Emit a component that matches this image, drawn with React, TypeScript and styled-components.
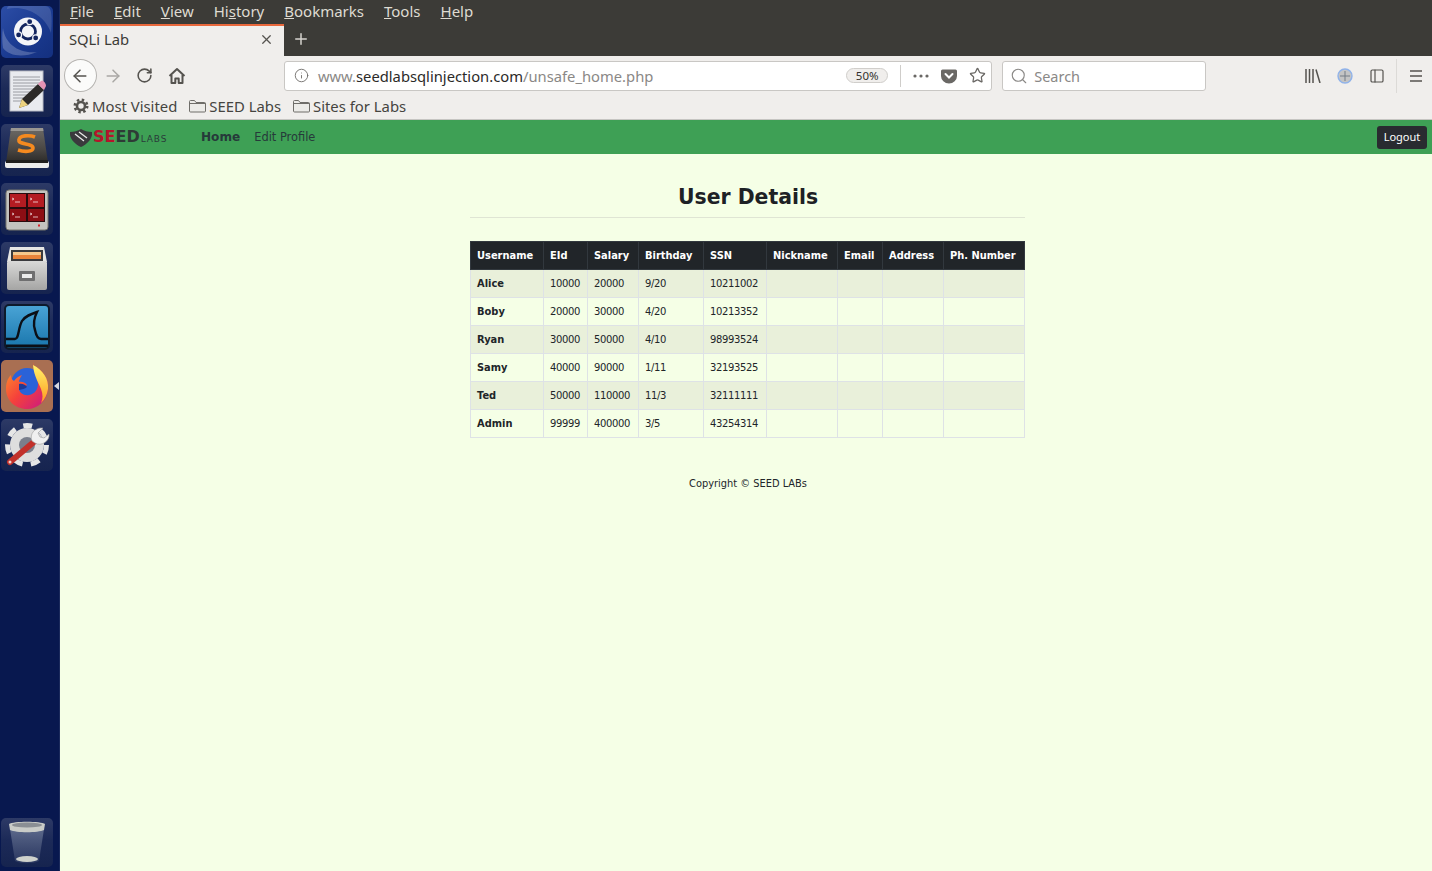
import React from "react";
import styled, { createGlobalStyle } from "styled-components";
import { ArrowLeft, ArrowRight, RotateCw, Info, Star, Search, X, Plus, PanelLeft } from "lucide-react";

const GlobalStyle = createGlobalStyle`
  html, body {
    margin: 0;
    padding: 0;
    height: 100%;
    overflow: hidden;
  }
  * { box-sizing: border-box; }
`;

const PAGE_BG = "#f5ffe6";

const Desktop = styled.div`
  display: flex;
  width: 1432px;
  height: 871px;
  background: ${PAGE_BG};
`;

/* launcher */
const Launcher = styled.aside`
  width: 60px;
  flex: none;
  position: relative;
  display: flex;
  flex-direction: column;
  gap: 7px;
  padding: 6px 0 4px 1px;
  background: #08184f;
  border-right: 1px solid #1b2a5c;
`;
const Tile = styled.div<{ $bg?: string }>`
  width: 52px;
  height: 52px;
  border-radius: 5px;
  display: flex;
  align-items: center;
  justify-content: center;
  background: ${({ $bg }) => $bg || "linear-gradient(180deg, #2d3a66 0%, #1c2a58 45%, #16244f 100%)"};
`;
const TrashTile = styled(Tile)`
  margin-top: auto;
  height: 49px;
`;
const ActiveArrow = styled.div`
  position: absolute;
  left: 54px;
  top: 382px;
  width: 0;
  height: 0;
  border-top: 4px solid transparent;
  border-bottom: 4px solid transparent;
  border-right: 5px solid #d5d8e2;
`;

/* browser chrome */
const Browser = styled.main`
  flex: 1;
  min-width: 0;
  display: flex;
  flex-direction: column;
  font-family: "Noto Sans", "Open Sans", sans-serif;
`;
const MenuBar = styled.nav`
  height: 24px;
  display: flex;
  align-items: center;
  gap: 20px;
  padding: 0 0 2px 10px;
  background: #3c3b37;
  color: #dfdbd2;
  font-size: 15px;
`;
const TabStrip = styled.div`
  height: 32px;
  display: flex;
  background: #3c3b37;
`;
const Tab = styled.div`
  width: 224px;
  display: flex;
  align-items: center;
  justify-content: space-between;
  padding: 0 10px 4px 9px;
  background: #f0eeec;
  border-top: 2px solid #e9683c;
  color: #3c3b37;
  font-size: 14.75px;
`;
const NewTab = styled.div`
  width: 34px;
  display: flex;
  align-items: center;
  justify-content: center;
  padding-bottom: 2px;
  color: #d6d4cf;
`;
const Toolbar = styled.div`
  height: 39px;
  display: flex;
  align-items: center;
  background: #f0eeec;
  position: relative;
`;
const BackButton = styled.div`
  width: 33px;
  height: 33px;
  margin-left: 4px;
  border-radius: 50%;
  border: 1px solid #b5b3b0;
  background: #fbfbfa;
  display: flex;
  align-items: center;
  justify-content: center;
  color: #55534f;
`;
const ToolButton = styled.div<{ $dim?: boolean }>`
  width: 32px;
  height: 32px;
  display: flex;
  align-items: center;
  justify-content: center;
  color: ${({ $dim }) => ($dim ? "#a9a7a4" : "#55534f")};
`;
const UrlBar = styled.div`
  width: 709px;
  height: 30px;
  margin-left: 91px;
  display: flex;
  align-items: center;
  background: #fff;
  border: 1px solid #c9c7c4;
  border-radius: 3px;
  color: #5f5d59;
`;
const InfoSlot = styled.div`
  width: 33px;
  display: flex;
  justify-content: center;
  color: #6a6865;
`;
const Url = styled.div`
  flex: 1;
  font-size: 14.75px;
  color: #8a8886;
  white-space: nowrap;
  b {
    font-weight: 400;
    color: #2b2a28;
  }
`;
const ZoomBadge = styled.div`
  width: 42px;
  height: 15px;
  margin-right: 12px;
  border: 1px solid #d0cecb;
  border-radius: 8px;
  background: #f0eeec;
  color: #33322f;
  font-size: 11.5px;
  display: flex;
  align-items: center;
  justify-content: center;
`;
const UrlDivider = styled.div`
  width: 1px;
  height: 22px;
  background: #cfcdca;
  margin-right: 6px;
`;
const UrlAction = styled.div`
  width: 28px;
  display: flex;
  justify-content: center;
  align-items: center;
  color: #6a6865;
`;
const SearchBox = styled.div`
  width: 204px;
  height: 30px;
  margin-left: 10px;
  padding-left: 7px;
  display: flex;
  align-items: center;
  gap: 6px;
  background: #fff;
  border: 1px solid #c9c7c4;
  border-radius: 3px;
  color: #8a8886;
  font-size: 14.5px;
`;
const RightIcons = styled.div`
  margin-left: 91px;
  display: flex;
  align-items: center;
  color: #55534f;
`;
const RightSlot = styled.div`
  width: 32px;
  height: 32px;
  display: flex;
  align-items: center;
  justify-content: center;
`;
const ToolSeparator = styled.div`
  width: 1px;
  height: 34px;
  margin: 0 3px 0 3px;
  background: #dcdad7;
`;
const BookmarkBar = styled.div`
  height: 25px;
  display: flex;
  align-items: center;
  gap: 12px;
  padding: 0 0 3px 13px;
  background: #f0eeec;
  border-bottom: 1px solid #c6c5c2;
  color: #3f3e3b;
  font-size: 14.85px;
`;
const Bookmark = styled.div`
  display: flex;
  align-items: center;
  gap: 3px;
  color: #45443f;
`;

/* page */
const NavBar = styled.header`
  height: 34px;
  flex: none;
  display: flex;
  align-items: center;
  padding: 0 5px 1px 10px;
  background: #3ea055;
  font-family: "DejaVu Sans", sans-serif;
`;
const Logo = styled.div`
  width: 98px;
  display: flex;
  align-items: baseline;
  margin: 3px 33px 0 0;
  white-space: nowrap;
  svg {
    align-self: center;
  }
`;
const LogoSeed = styled.span`
  font-weight: 700;
  font-size: 16px;
  line-height: 16px;
  margin-left: 1px;
  color: #b5152b;
`;
const LogoSeedDark = styled.span`
  color: #2e3b36;
`;
const LogoLabs = styled.span`
  font-size: 9px;
  line-height: 9px;
  letter-spacing: 0.9px;
  color: #2a3a3a;
  margin-left: 1px;
`;
const NavLink = styled.a<{ $active?: boolean }>`
  color: #263a3a;
  font-size: ${({ $active }) => ($active ? "12.1px" : "11.4px")};
  font-weight: ${({ $active }) => ($active ? 700 : 400)};
  margin-right: 14px;
`;
const LogoutButton = styled.button`
  margin: 2px 0 0 auto;
  width: 50px;
  height: 23px;
  padding: 0 0 2px;
  border: none;
  border-radius: 3px;
  background: #292b30;
  color: #fff;
  font-family: "Noto Sans", sans-serif;
  font-size: 11px;
`;
const Content = styled.section`
  flex: 1;
  display: flex;
  flex-direction: column;
  align-items: center;
  padding: 31px 0 0 3px;
  background: ${PAGE_BG};
  font-family: "DejaVu Sans", sans-serif;
  color: #212529;
`;
const Title = styled.h2`
  width: 555px;
  margin: 0 0 23px;
  padding: 0 0 8px 1px;
  border-bottom: 1px solid #dfe5d4;
  text-align: center;
  font-size: 20.4px;
  line-height: 24px;
  font-weight: 700;
  color: #1d2125;
`;
const Table = styled.table`
  width: 554px;
  margin-right: 1px;
  border-collapse: collapse;
  table-layout: fixed;
  font-size: 10px;
  letter-spacing: -0.36px;
`;
const Th = styled.th`
  height: 28px;
  padding: 0 6px 1px 6.5px;
  text-align: left;
  background: #212529;
  color: #fff;
  font-weight: 700;
  font-size: 9.9px;
  letter-spacing: 0;
  border: 1px solid #32383e;
  white-space: nowrap;
`;
const Row = styled.tr<{ $striped: boolean }>`
  height: 28px;
  background: ${({ $striped }) => ($striped ? "#e9f0da" : "transparent")};
`;
const Td = styled.td`
  padding: 0 6px 1px 6.5px;
  border: 1px solid #dee2e6;
  white-space: nowrap;
`;
const NameCell = styled(Td)`
  font-weight: 700;
  font-size: 9.9px;
  letter-spacing: 0;
`;
const Copyright = styled.p`
  margin: 39px 0 0 1px;
  font-size: 9.85px;
  line-height: 13px;
  color: #212529;
`;

const columns = [
  { label: "Username", width: 73 },
  { label: "EId", width: 44 },
  { label: "Salary", width: 51 },
  { label: "Birthday", width: 65 },
  { label: "SSN", width: 63 },
  { label: "Nickname", width: 71 },
  { label: "Email", width: 45 },
  { label: "Address", width: 61 },
  { label: "Ph. Number", width: 81 },
];

const users = [
  ["Alice", "10000", "20000", "9/20", "10211002"],
  ["Boby", "20000", "30000", "4/20", "10213352"],
  ["Ryan", "30000", "50000", "4/10", "98993524"],
  ["Samy", "40000", "90000", "1/11", "32193525"],
  ["Ted", "50000", "110000", "11/3", "32111111"],
  ["Admin", "99999", "400000", "3/5", "43254314"],
];

const UbuntuIcon = () => (
  <svg width="52" height="52" viewBox="0 0 52 52">
    <path d="M6 3c18-4 38 6 44 24 1-10 1-20-1-24-1-2-3-3-5-3H8C7 0 6 1 6 3z" fill="#fff" fillOpacity=".14" />
    <path d="M2 22c2 16 16 26 34 24-14 6-28 4-34-4-1-6-1-14 0-20z" fill="#fff" fillOpacity=".22" />
    <g transform="translate(0 -6.500)">
      <circle cx="27" cy="32" r="14" fill="#f4f5f8" />
      <circle cx="27" cy="32" r="7.500" fill="none" stroke="#13255f" strokeWidth="2.800" />
      <circle cx="28.700" cy="22.200" r="3.600" fill="#f4f5f8" />
      <circle cx="17.600" cy="35.400" r="3.600" fill="#f4f5f8" />
      <circle cx="34.700" cy="38.400" r="3.600" fill="#f4f5f8" />
      <circle cx="28.700" cy="22.200" r="2.400" fill="#13255f" />
      <circle cx="17.600" cy="35.400" r="2.400" fill="#13255f" />
      <circle cx="34.700" cy="38.400" r="2.400" fill="#13255f" />
    </g>
  </svg>
);

const EditorIcon = () => (
  <svg width="44" height="44" viewBox="0 0 44 44">
    <rect x="5" y="2" width="33" height="40" fill="#e9ebef" stroke="#b9bcc4" />
    <path d="M8 8h27M8 11h27M8 14h27M8 17h24M8 20h21M8 23h18M8 26h15M8 29h12M8 32h9" stroke="#85888f" strokeWidth=".8" />
    <path d="M14 39l3-9 16-15 6 6-16 15z" fill="#2c2a28" />
    <path d="M14 39l3-9 6 6z" fill="#ecd27e" />
    <path d="M33 15l3-3c2-1 5 2 5 5l-2 4z" fill="#e593b4" />
  </svg>
);

const SublimeIcon = () => (
  <svg width="46" height="46" viewBox="0 0 46 46">
    <defs>
      <linearGradient id="sublimeBox" x1="0" y1="0" x2="0" y2="1">
        <stop offset="0" stopColor="#6d6a66" />
        <stop offset=".6" stopColor="#4a4744" />
        <stop offset="1" stopColor="#2a2927" />
      </linearGradient>
    </defs>
    <rect x="1" y="34" width="44" height="7" rx="2" fill="#ececec" />
    <path d="M7 1h32l5 35H2z" fill="url(#sublimeBox)" />
    <path d="M7 1h32l.5 3H6.500z" fill="#9a9792" />
    <path d="M2 33h42v3H2z" fill="#1f1e1d" />
    <path d="M31 10c-5-2-16-2-16 3-1 5 14 3 14 8 0 4-9 4-15 2" fill="none" stroke="#f58a1f" strokeWidth="3.600" />
  </svg>
);

const TerminalIcon = () => (
  <svg width="46" height="46" viewBox="0 0 46 46">
    <rect x="2" y="4" width="42" height="40" rx="3" fill="#c3c3bf" stroke="#77766f" />
    <rect x="5" y="7" width="36" height="29" fill="#2a0a0d" />
    <rect x="6" y="8" width="16" height="13" fill="#b31c22" />
    <rect x="24" y="8" width="16" height="13" fill="#b31c22" />
    <rect x="6" y="23" width="16" height="12" fill="#8c0e14" />
    <rect x="24" y="23" width="16" height="12" fill="#8c0e14" />
    <path d="M8 12l2 1-2 1M26 12l2 1-2 1M8 27l2 1-2 1M26 27l2 1-2 1" stroke="#fff" strokeWidth=".7" fill="none" />
    <path d="M11 16h5M29 16h5M11 31h5M29 31h5" stroke="#fff" strokeWidth=".7" />
    <rect x="34" y="38.500" width="2" height="2" fill="#d8232a" />
  </svg>
);

const FilesIcon = () => (
  <svg width="46" height="48" viewBox="0 0 46 48">
    <defs>
      <linearGradient id="filesFront" x1="0" y1="0" x2="0" y2="1">
        <stop offset="0" stopColor="#d9d9d8" />
        <stop offset="1" stopColor="#a5a5a4" />
      </linearGradient>
    </defs>
    <path d="M6 3h34l3 15H3z" fill="#e6e6e4" />
    <rect x="7" y="6" width="32" height="12" fill="#3a3a3d" />
    <rect x="9" y="8" width="28" height="3" fill="#f5c78c" />
    <rect x="9" y="11" width="28" height="4" fill="#e8833a" />
    <rect x="3" y="17" width="40" height="29" rx="2" fill="url(#filesFront)" />
    <rect x="15" y="27" width="16" height="10" rx="1" fill="#6f6f70" />
    <rect x="18" y="30" width="10" height="4" fill="#ececec" />
  </svg>
);

const WiresharkIcon = () => (
  <svg width="48" height="48" viewBox="0 0 48 48">
    <defs>
      <linearGradient id="sharkBg" x1="0" y1="0" x2="0" y2="1">
        <stop offset="0" stopColor="#4aa4d6" />
        <stop offset="1" stopColor="#1875ab" />
      </linearGradient>
    </defs>
    <rect x="2" y="2" width="44" height="44" rx="4" fill="url(#sharkBg)" stroke="#0d1a2c" strokeWidth="2" />
    <path d="M3 36h9c4 0 3-11 7-18 3-5 9-7 15-9-3 6-4 12-2 18 1 5 3 9 6 9h7" fill="none" stroke="#0b0f16" strokeWidth="2.400" />
    <path d="M3 43h42" stroke="#0b0f16" strokeWidth="3" />
  </svg>
);

const FirefoxIcon = () => (
  <svg width="48" height="48" viewBox="0 0 48 48">
    <defs>
      <linearGradient id="foxBody" x1="0" y1="0" x2="1" y2="1">
        <stop offset="0" stopColor="#ff9a28" />
        <stop offset=".5" stopColor="#f5413b" />
        <stop offset="1" stopColor="#c5158a" />
      </linearGradient>
      <linearGradient id="foxTail" x1="0" y1="0" x2="0" y2="1">
        <stop offset="0" stopColor="#fff36b" />
        <stop offset="1" stopColor="#ff9a1f" />
      </linearGradient>
    </defs>
    <circle cx="24" cy="22" r="16" fill="#2a62d8" />
    <path d="M30 3c10 5 16 14 15 24-1 12-10 20-21 20C12 47 3 38 3 27c0-5 1-10 5-14 0 3 1 5 3 6 2-3 5-5 8-6-2 3-3 5-3 7 3-1 7 1 8 3-2 2-5 2-8 3 0 5 5 8 10 7 6-1 9-6 9-11 0-6-4-11-5-22z" fill="url(#foxBody)" />
    <path d="M30 3c10 5 16 14 15 24-1 6-3 10-7 14 2-4 2-9 0-14-2-6-7-12-8-24z" fill="url(#foxTail)" />
    <path d="M16 22c3-1 7 1 8 3-2 2-5 2-8 3z" fill="#1e3a9a" />
  </svg>
);

const ToolsIcon = () => (
  <svg width="48" height="48" viewBox="0 0 48 48">
    <circle cx="24" cy="24" r="17" fill="#dedede" />
    <circle cx="24" cy="24" r="19.500" fill="none" stroke="#e6e6e6" strokeWidth="5" strokeDasharray="9 8.500" />
    <circle cx="24" cy="24" r="8" fill="#7a7f8c" />
    <path d="M7 41l25-21" stroke="#c2312b" strokeWidth="6" strokeLinecap="round" />
    <circle cx="7" cy="41" r="1.500" fill="#f0d0cc" />
    <path d="M29 20c-3-7 3-14 11-13l-5 5 2 4 4 1 5-4c1 7-8 13-14 9z" fill="#f0f0f0" stroke="#9a9a9a" strokeWidth=".6" />
  </svg>
);

const TrashIcon = () => (
  <svg width="44" height="46" viewBox="0 0 44 46">
    <defs>
      <linearGradient id="trashBody" x1="0" y1="0" x2="0" y2="1">
        <stop offset="0" stopColor="#6a7796" stopOpacity=".8" />
        <stop offset="1" stopColor="#39456b" stopOpacity=".6" />
      </linearGradient>
    </defs>
    <path d="M5 9l5 32c6 3 18 3 24 0l5-32z" fill="url(#trashBody)" />
    <path d="M4 4c4-3 32-3 36 0l-1 6c-6 3-28 3-34 0z" fill="#c9ccc8" />
    <ellipse cx="22" cy="5" rx="15" ry="2.500" fill="#8a8f94" />
    <ellipse cx="22" cy="39" rx="11" ry="3" fill="#cfd2cc" />
  </svg>
);

const HomeIcon = () => (
  <svg width="18" height="18" viewBox="0 0 18 18" fill="none" stroke="currentColor" strokeWidth="2">
    <path d="M1.500 9L9 2l7.500 7" strokeLinejoin="round" />
    <path d="M3.500 8v8h3.800v-4.500h3.400V16h3.800V8" strokeLinejoin="round" />
  </svg>
);

const GearIcon = () => (
  <svg width="16" height="16" viewBox="0 0 16 16" fill="none" stroke="#55534f">
    <circle cx="8" cy="8" r="4" strokeWidth="2.600" />
    <circle cx="8" cy="8" r="6.200" strokeWidth="2.600" strokeDasharray="2.400 2.470" />
  </svg>
);

const FolderIcon = () => (
  <svg width="17" height="14" viewBox="0 0 17 14" fill="#ecebe8" stroke="#6f6d69">
    <path d="M.5 2.500a1 1 0 0 1 1-1h4l1.500 2h8.500a1 1 0 0 1 1 1v7.500a1 1 0 0 1-1 1h-14a1 1 0 0 1-1-1z" />
    <path d="M.5 4.500h16" />
  </svg>
);

const PocketIcon = () => (
  <svg width="16" height="16" viewBox="0 0 16 16">
    <path d="M1.500 1.500h13A1.500 1.500 0 0 1 16 3v5a8 7.500 0 0 1-16 0V3a1.500 1.500 0 0 1 1.500-1.500z" fill="#6a6865" />
    <path d="M4.500 6L8 9.500 11.500 6" fill="none" stroke="#fff" strokeWidth="2" strokeLinecap="round" />
  </svg>
);

const DotsIcon = () => (
  <svg width="16" height="4" viewBox="0 0 16 4" fill="currentColor">
    <circle cx="2" cy="2" r="1.600" />
    <circle cx="8" cy="2" r="1.600" />
    <circle cx="14" cy="2" r="1.600" />
  </svg>
);

const LibraryIcon = () => (
  <svg width="16" height="14" viewBox="0 0 16 14" stroke="currentColor" strokeWidth="1.500" fill="none">
    <path d="M1 0v14M4.500 0v14M8 0v14M11 .5l4 13.500" />
  </svg>
);

const SyncIcon = () => (
  <svg width="18" height="18" viewBox="0 0 18 18">
    <circle cx="9" cy="9" r="7" fill="#c4c4c4" stroke="#8fb2ea" strokeWidth="1.400" />
    <path d="M9 4v10M4 9h10" stroke="#757c86" strokeWidth="1" />
  </svg>
);

const MenuIcon = () => (
  <svg width="14" height="12" viewBox="0 0 14 12" stroke="currentColor" strokeWidth="1.700">
    <path d="M1 1h12M1 6h12M1 11h12" />
  </svg>
);

const LogoShield = () => (
  <svg width="22" height="18" viewBox="0 0 22 18">
    <path d="M0 3c4 0 8-1 11-3 3 2 7 3 11 3 1 6-4 12-11 15C4 15-1 9 0 3z" fill="#3a3a3d" />
    <path d="M5 5l9 7M9 3l8 6" stroke="#e8e8e8" strokeWidth="1.300" />
  </svg>
);

const App: React.FC = () => {
  return (
    <Desktop>
      <GlobalStyle />
      <Launcher>
        <Tile $bg="linear-gradient(135deg, #2c4da6 0%, #1a3a90 55%, #14307f 100%)"><UbuntuIcon /></Tile>
        <Tile><EditorIcon /></Tile>
        <Tile><SublimeIcon /></Tile>
        <Tile><TerminalIcon /></Tile>
        <Tile><FilesIcon /></Tile>
        <Tile><WiresharkIcon /></Tile>
        <Tile $bg="#a96f52"><FirefoxIcon /></Tile>
        <Tile><ToolsIcon /></Tile>
        <TrashTile><TrashIcon /></TrashTile>
        <ActiveArrow />
      </Launcher>
      <Browser>
        <MenuBar>
          <span><u>F</u>ile</span>
          <span><u>E</u>dit</span>
          <span><u>V</u>iew</span>
          <span>Hi<u>s</u>tory</span>
          <span><u>B</u>ookmarks</span>
          <span><u>T</u>ools</span>
          <span><u>H</u>elp</span>
        </MenuBar>
        <TabStrip>
          <Tab>
            SQLi Lab
            <X size={15} color="#55534f" />
          </Tab>
          <NewTab><Plus size={18} /></NewTab>
        </TabStrip>
        <Toolbar>
          <BackButton><ArrowLeft size={20} strokeWidth={1.8} /></BackButton>
          <ToolButton $dim><ArrowRight size={20} strokeWidth={1.8} /></ToolButton>
          <ToolButton><RotateCw size={17} strokeWidth={2.2} /></ToolButton>
          <ToolButton><HomeIcon /></ToolButton>
          <UrlBar>
            <InfoSlot><Info size={15} strokeWidth={1.4} /></InfoSlot>
            <Url>www.<b>seedlabsqlinjection.com</b>/unsafe_home.php</Url>
            <ZoomBadge>50%</ZoomBadge>
            <UrlDivider />
            <UrlAction><DotsIcon /></UrlAction>
            <UrlAction><PocketIcon /></UrlAction>
            <UrlAction><Star size={17} strokeWidth={1.8} /></UrlAction>
          </UrlBar>
          <SearchBox>
            <Search size={18} strokeWidth={1.5} />
            Search
          </SearchBox>
          <RightIcons>
            <RightSlot><LibraryIcon /></RightSlot>
            <RightSlot><SyncIcon /></RightSlot>
            <RightSlot><PanelLeft size={16} strokeWidth={1.8} /></RightSlot>
            <ToolSeparator />
            <RightSlot><MenuIcon /></RightSlot>
          </RightIcons>
        </Toolbar>
        <BookmarkBar>
          <Bookmark><GearIcon />Most Visited</Bookmark>
          <Bookmark><FolderIcon />SEED Labs</Bookmark>
          <Bookmark><FolderIcon />Sites for Labs</Bookmark>
        </BookmarkBar>
        <NavBar>
          <Logo>
            <LogoShield />
            <LogoSeed>SE<LogoSeedDark>ED</LogoSeedDark></LogoSeed>
            <LogoLabs>LABS</LogoLabs>
          </Logo>
          <NavLink $active>Home</NavLink>
          <NavLink>Edit Profile</NavLink>
          <LogoutButton>Logout</LogoutButton>
        </NavBar>
        <Content>
          <Title>User Details</Title>
          <Table>
            <colgroup>
              {columns.map((c) => (
                <col key={c.label} width={c.width} />
              ))}
            </colgroup>
            <thead>
              <tr>
                {columns.map((c) => (
                  <Th key={c.label}>{c.label}</Th>
                ))}
              </tr>
            </thead>
            <tbody>
              {users.map(([name, ...rest], i) => (
                <Row key={name} $striped={i % 2 === 0}>
                  <NameCell>{name}</NameCell>
                  {rest.map((value, j) => (
                    <Td key={j}>{value}</Td>
                  ))}
                  <Td />
                  <Td />
                  <Td />
                  <Td />
                </Row>
              ))}
            </tbody>
          </Table>
          <Copyright>Copyright © SEED LABs</Copyright>
        </Content>
      </Browser>
    </Desktop>
  );
};

export default App;
